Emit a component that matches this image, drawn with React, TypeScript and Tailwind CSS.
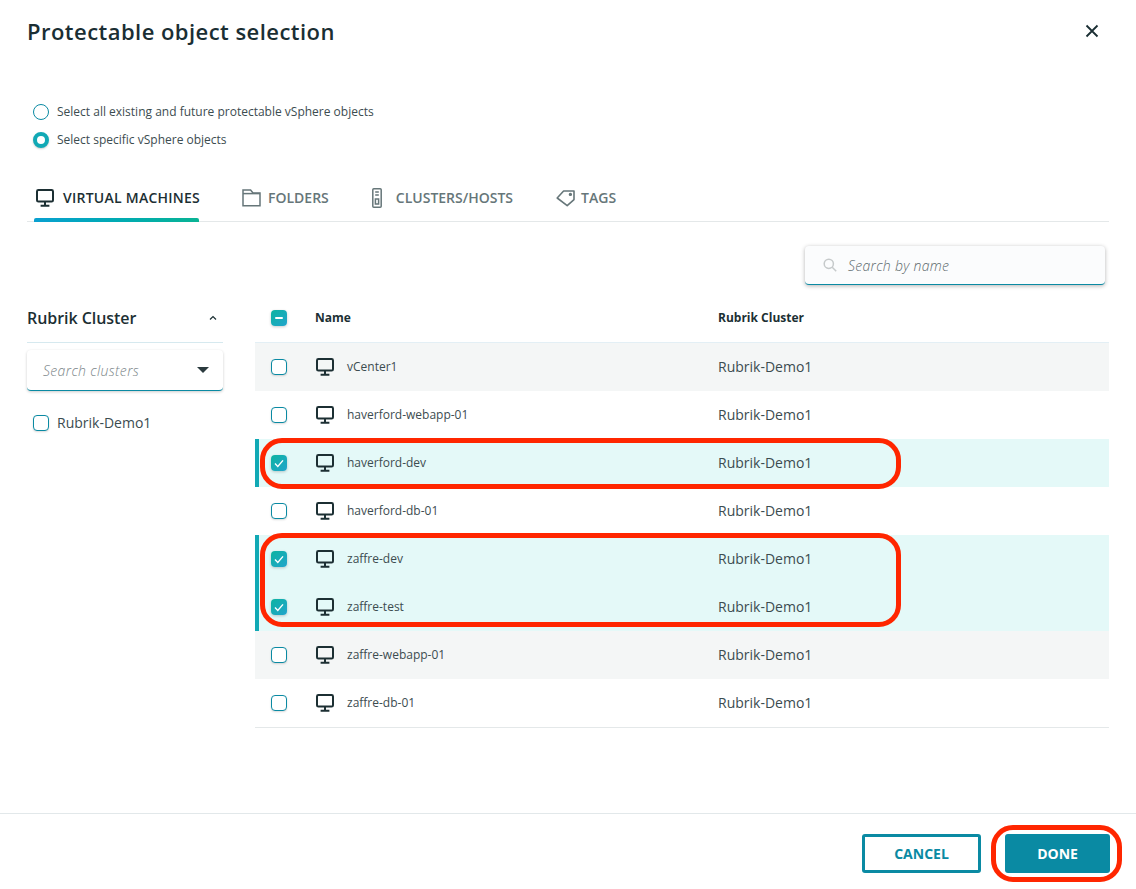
import React from "react";

const Monitor = ({ cls = "text-[#1c2f33]", w = 20 }: { cls?: string; w?: number }) => (
  <svg width={w} height={w} viewBox="0 0 20 20" fill="none" className={`shrink-0 ${cls}`} stroke="currentColor" strokeWidth="2">
    <rect x="2" y="2" width="16" height="11.6" rx="1.4" />
    <path d="M10 13.6v3.6M5.6 17.8h8.8" />
  </svg>
);

const Check = ({ checked }: { checked?: boolean }) =>
  checked ? (
    <span className="flex h-4 w-4 items-center justify-center rounded-[4px] bg-gradient-to-br from-[#0cb3a0] to-[#22a4cc] shadow-[0_1px_3px_rgba(0,0,0,0.2)]">
      <svg width="10" height="9" viewBox="0 0 10 9" fill="none" stroke="white" strokeWidth="1.4">
        <path d="M1 4.6 3.8 7.4 9 1.4" />
      </svg>
    </span>
  ) : (
    <span className="block h-4 w-4 rounded-[4px] border border-[#0a8aa3] bg-white shadow-[0_1px_2px_rgba(0,0,0,0.15)]" />
  );

const rows = [
  { name: "vCenter1", bg: "bg-[#f4f6f6]" },
  { name: "haverford-webapp-01", bg: "bg-white" },
  { name: "haverford-dev", bg: "bg-[#e4f9f8]", sel: true },
  { name: "haverford-db-01", bg: "bg-white" },
  { name: "zaffre-dev", bg: "bg-[#e4f9f8]", sel: true },
  { name: "zaffre-test", bg: "bg-[#e4f9f8]", sel: true },
  { name: "zaffre-webapp-01", bg: "bg-[#f4f6f6]" },
  { name: "zaffre-db-01", bg: "bg-white" },
];

export default function App() {
  return (
    <div className="relative flex h-[889px] w-[1136px] flex-col overflow-hidden bg-white font-['Open_Sans',sans-serif] text-[#1c2f33]">
      <header className="flex h-[64px] items-center justify-between pb-[2px] pl-[27px] pr-[36px]">
        <h1 className="text-[22px] font-semibold leading-none tracking-[0.46px] text-[#1a2e33]">Protectable object selection</h1>
        <svg width="16" height="16" viewBox="0 0 16 16" stroke="#1a2e33" strokeWidth="1.8" fill="none">
          <path d="M2.5 2.5l11 11M13.5 2.5l-11 11" />
        </svg>
      </header>

      <div className="flex flex-col gap-[8px] pl-[33px] pt-[38px]">
        <label className="flex h-[20px] items-center gap-[8px] text-[12px] text-[#3c4c50]">
          <span className="block h-4 w-4 rounded-full border border-[#0a8aa3] bg-white" />
          Select all existing and future protectable vSphere objects
        </label>
        <label className="flex h-[20px] items-center gap-[8px] text-[12px] text-[#3c4c50]">
          <span className="block h-4 w-4 rounded-full border-[4px] border-[#11a9b5] bg-white shadow-[0_1px_2px_rgba(0,0,0,0.2)]" />
          Select specific vSphere objects
        </label>
      </div>

      <nav className="ml-[27px] mr-[27px] mt-[20px] flex h-[52px] items-stretch border-b border-[#e4e8e9] pt-[4px] text-[14px] font-semibold text-[#667679]">
        <div className="relative ml-[7px] flex w-[165px] items-center gap-[8px] pl-[1px] text-[#1c2f33]">
          <Monitor w={20} />
          <span className="whitespace-nowrap text-[14px] leading-none tracking-[0.25px]">VIRTUAL MACHINES</span>
          <span className="absolute bottom-[-1px] left-0 h-[4px] w-[165px] rounded-t-[2px] bg-gradient-to-r from-[#0aa0d0] to-[#0ab394]" />
        </div>
        <div className="ml-[43px] flex items-center gap-[7px]">
          <svg width="19" height="18" viewBox="0 0 19 18" fill="none" stroke="#667679" strokeWidth="1.5">
            <path d="M1 16.8V1h7.6l2.4 3H18v12.8z" />
            <path d="M1 4.6h17" />
          </svg>
          FOLDERS
        </div>
        <div className="ml-[42px] flex items-center gap-[13px]">
          <svg width="12" height="20" viewBox="0 0 12 20" fill="none" stroke="#667679" strokeWidth="1.5">
            <rect x="1.8" y="0.8" width="8.4" height="18.4" rx="1" />
            <path d="M4.2 4h3.6M4.2 7h3.6" />
            <rect x="4.4" y="11" width="3.2" height="5" />
          </svg>
          CLUSTERS/HOSTS
        </div>
        <div className="ml-[43px] flex items-center gap-[5px]">
          <svg width="20" height="18" viewBox="0 0 20 18" fill="none" stroke="#667679" strokeWidth="1.6">
            <path d="M1.2 9 7.6 2h10.4v8.6L11.2 16.6z" strokeLinejoin="round" />
            <circle cx="14.4" cy="5.4" r="0.9" />
          </svg>
          TAGS
        </div>
      </nav>

      <div className="flex justify-end pr-[31px] pt-[24px]">
        <div className="flex h-[39px] w-[300px] items-center gap-[11px] rounded-[4px] border-b border-[#0a8aa3] bg-[#fbfcfd] pl-[18px] shadow-[0_1px_4px_rgba(0,0,0,0.3)]">
          <svg width="14" height="14" viewBox="0 0 14 14" fill="none" stroke="#c6cacb" strokeWidth="1.5">
            <circle cx="5.8" cy="5.8" r="4.6" />
            <path d="M9.2 9.2l4 4" />
          </svg>
          <span className="text-[14px] font-light italic tracking-[0.3px] text-[#5d6b6e]">Search by name</span>
        </div>
      </div>

      <div className="flex flex-1 items-start">
        <aside className="ml-[27px] w-[196px] pt-[13px]">
          <div className="flex h-[45px] items-center justify-between border-b border-[#d6e9ef] pb-[4px] pr-[6px]">
            <span className="text-[16px] font-semibold tracking-[-0.05px] text-[#1c2f33]">Rubrik Cluster</span>
            <svg width="8" height="6" viewBox="0 0 8 6" fill="none" stroke="#1c2f33" strokeWidth="1.2">
              <path d="M1 4.5 4 1.5l3 3" />
            </svg>
          </div>
          <div className="mt-[7px] flex h-[41px] items-center justify-between rounded-[4px] border-b border-[#0a8aa3] bg-white pl-[16px] pr-[14px] shadow-[0_1px_3px_rgba(0,0,0,0.2)]">
            <span className="text-[14px] font-light italic tracking-[0.35px] text-[#7a8588]">Search clusters</span>
            <span className="h-0 w-0 border-x-[6px] border-t-[6px] border-x-transparent border-t-[#2b3a3e]" />
          </div>
          <label className="ml-[6px] mt-[21px] flex items-center gap-[8px] text-[14px] text-[#3c4c50]">
            <Check />
            Rubrik-Demo1
          </label>
        </aside>

        <main className="ml-[32px] w-[854px]">
          <div className="flex h-[58px] items-center border-b border-[#e3eff5] pl-[16px] pt-[8px] text-[12px] font-bold text-[#1c2f33]">
            <span className="flex h-4 w-4 items-center justify-center rounded-[4px] bg-gradient-to-br from-[#0cb3a0] to-[#22a4cc] shadow-[0_1px_3px_rgba(0,0,0,0.2)]">
              <span className="block h-[2px] w-[8px] rounded bg-white" />
            </span>
            <span className="ml-[28px] w-[403px]">Name</span>
            <span>Rubrik Cluster</span>
          </div>
          <div className="border-b border-[#e4e8e9]">
            {rows.map((r) => (
              <div key={r.name} className={`relative flex h-[48px] items-center pl-[16px] ${r.bg}`}>
                {r.sel && <span className="absolute inset-y-0 left-0 w-[4px] bg-[#11a9b5]" />}
                <Check checked={r.sel} />
                <span className="ml-[28px] flex w-[403px] items-center gap-[12px] text-[12px] text-[#3c4c50]">
                  <Monitor w={20} />
                  {r.name}
                </span>
                <span className="-mt-[1px] text-[14px] text-[#3c4c50]">Rubrik-Demo1</span>
              </div>
            ))}
          </div>
        </main>
      </div>

      <footer className="flex h-[76px] shrink-0 items-start justify-end gap-[24px] border-t border-[#e2e8ea] pr-[26px] pt-[20px]">
        <button className="flex h-[39px] w-[119px] items-center justify-center rounded-[3px] border-[3px] border-[#0a8aa3] bg-white text-[14px] font-bold text-[#0a8aa3]">CANCEL</button>
        <button className="flex h-[39px] w-[105px] items-center justify-center rounded-[3px] bg-[#0a8aa3] text-[14px] font-bold text-white">DONE</button>
      </footer>

      <span className="absolute left-[260px] top-[438px] h-[51px] w-[641px] rounded-[22px] border-[5px] border-[#ff2600]" />
      <span className="absolute left-[260px] top-[533px] h-[94px] w-[641px] rounded-[22px] border-[5px] border-[#ff2600]" />
      <span className="absolute left-[991px] top-[825px] h-[57px] w-[131px] rounded-[22px] border-[5px] border-[#ff2600]" />
    </div>
  );
}
